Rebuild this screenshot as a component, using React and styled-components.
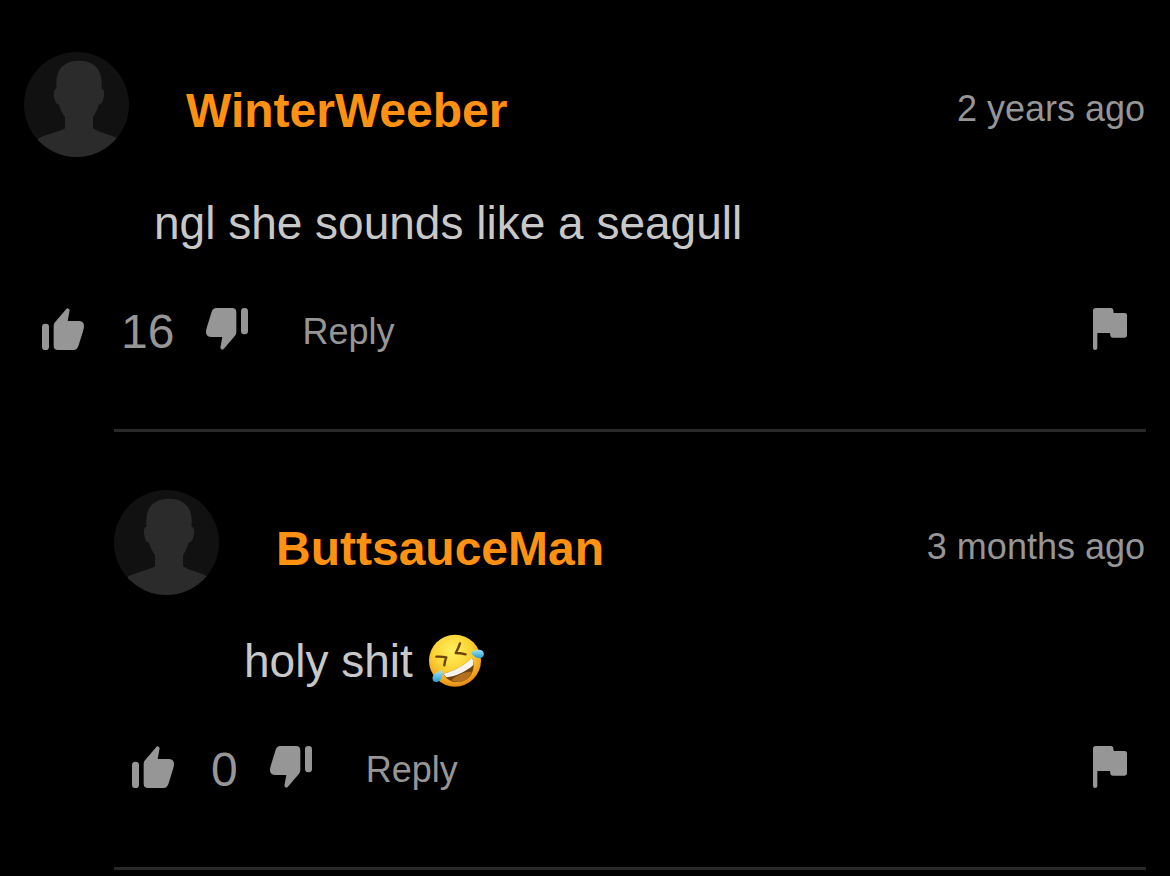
import React from 'react';
import styled, { createGlobalStyle } from 'styled-components';

const comments = [
    {
        id: 1,
        user: 'WinterWeeber',
        date: '2 years ago',
        text: 'ngl she sounds like a seagull',
        votes: 16,
    },
    {
        id: 2,
        user: 'ButtsauceMan',
        date: '3 months ago',
        text: 'holy shit',
        laughing: true,
        votes: 0,
        nested: true,
    },
];

const AvatarIcon = () => (
    <svg viewBox="0 0 315 315" aria-hidden="true">
        <defs>
            <clipPath id="avatar-circle">
                <circle cx="157.5" cy="157.5" r="157.5" />
            </clipPath>
        </defs>
        <g clipPath="url(#avatar-circle)">
            <rect width="315" height="315" fill="#111111" />
            <path
                fill="#2b2b2b"
                d="M165 26C128 26 103 44 98 78C96 90 97 100 98 109C89 112 88 124 91 138C94 150 97 157 104 157C109 173 116 186 123 196V229C110 237 88 242 66 250C54 254 46 257 41 261V315H278V258C270 254 260 251 250 247C234 241 216 236 207 228V196C214 186 220 173 225 157C232 157 236 150 239 138C242 124 241 112 232 109C233 100 234 90 232 78C227 44 202 26 165 26Z"
            />
        </g>
    </svg>
);

const ThumbIcon = () => (
    <svg viewBox="0 0 126 126" aria-hidden="true">
        <rect x="0" y="47" width="21" height="79" rx="10" />
        <path d="M35 54Q35 47 39 43L71 5Q76 -1 80 2Q84 5 82 12L77 39H112Q126 41 126 54Q126 60 124 66L110 112Q106 126 95 126H48Q35 126 35 113Z" />
    </svg>
);

const FlagIcon = () => (
    <svg viewBox="0 0 102 126" aria-hidden="true">
        <path d="M8 0H54Q60 0 61 6L62 15H95Q102 15 102 22V82Q102 89 95 89H60Q53 89 52 83L51 75H13V120Q13 126 6 126Q0 126 0 120V8Q0 0 8 0Z" />
    </svg>
);

const LaughingIcon = () => (
    <svg viewBox="0 0 168 168" role="img" aria-label="rolling on the floor laughing">
        <defs>
            <radialGradient id="face" cx="0.45" cy="0.32" r="0.7">
                <stop offset="0" stopColor="#fff05e" />
                <stop offset="0.5" stopColor="#fcd436" />
                <stop offset="0.82" stopColor="#f3a922" />
                <stop offset="1" stopColor="#de8416" />
            </radialGradient>
            <linearGradient id="tear" x1="0" y1="0" x2="0" y2="1">
                <stop offset="0" stopColor="#a5e6f8" />
                <stop offset="1" stopColor="#269dce" />
            </linearGradient>
        </defs>
        <circle cx="81" cy="83" r="78" fill="url(#face)" />
        <path
            fill="none"
            stroke="#6b430b"
            strokeWidth="7"
            strokeLinecap="round"
            strokeLinejoin="round"
            d="M25 71Q42 70 55 73Q50 84 49 97M96 31Q91 46 83 60Q97 60 113 64"
        />
        <path fill="#70430d" d="M46 122C76 114 108 98 132 74C143 96 136 126 114 140C90 154 60 148 46 122Z" />
        <path fill="#b5701f" d="M70 142C84 128 114 114 131 117C127 127 121 135 114 140C100 149 84 149 70 142Z" />
        <path fill="#f7f4ee" d="M46 122C76 114 108 98 132 74Q138 85 136 96C114 116 84 130 55 133Z" />
        <path fill="url(#tear)" d="M129 60C138 49 156 47 164 54C171 63 167 74 156 75C146 77 136 69 129 60Z" />
        <path fill="url(#tear)" d="M42 111C47 127 39 145 27 147C16 149 11 139 15 130C20 120 31 115 42 111Z" />
    </svg>
);

const Comment = ({ comment }) => (
    <Item $nested={comment.nested}>
        <Header>
            <Avatar>
                <AvatarIcon />
            </Avatar>
            <UserName href="#">{comment.user}</UserName>
            <DateText>{comment.date}</DateText>
        </Header>
        <Message>
            {comment.text}
            {comment.laughing && <LaughingIcon />}
        </Message>
        <Actions>
            <IconButton type="button" aria-label="Like">
                <ThumbIcon />
            </IconButton>
            <Votes>{comment.votes}</Votes>
            <IconButton type="button" aria-label="Dislike" $flipped>
                <ThumbIcon />
            </IconButton>
            <ReplyButton type="button">Reply</ReplyButton>
            <FlagButton type="button" aria-label="Report">
                <FlagIcon />
            </FlagButton>
        </Actions>
    </Item>
);

const App = () => {
    return (
        <>
            <GlobalStyle />
            <Comments>
                {comments.map((comment) => (
                    <React.Fragment key={comment.id}>
                        <Comment comment={comment} />
                        <Divider />
                    </React.Fragment>
                ))}
            </Comments>
        </>
    );
};

const GlobalStyle = createGlobalStyle`
    * {
        box-sizing: border-box;
    }
    body {
        margin: 0;
        background: #000;
        font-family: 'Liberation Sans', Arial, sans-serif;
    }
    button {
        padding: 0;
        border: 0;
        background: none;
        font-family: inherit;
        cursor: pointer;
    }
    svg {
        display: block;
    }
`;

const Comments = styled.main`
    padding: 52px 24px 0;
`;

const Item = styled.article`
    margin-left: ${({ $nested }) => ($nested ? '90px' : '0')};
    padding-bottom: 70px;
`;

const Header = styled.header`
    display: flex;
    align-items: center;
`;

const Avatar = styled.div`
    flex: none;
    width: 105px;
    height: 105px;
`;

const UserName = styled.a`
    margin-left: 57px;
    padding-top: 12px;
    color: #ff9112;
    font-size: 48px;
    font-weight: bold;
    line-height: 56px;
    text-decoration: none;
`;

const DateText = styled.time`
    margin-left: auto;
    padding: 8px 1px 0 0;
    color: #969696;
    font-size: 36px;
    line-height: 40px;
`;

const Message = styled.p`
    display: flex;
    align-items: center;
    gap: 15px;
    margin: 38px 0 54px 130px;
    color: #c8c8c8;
    font-size: 46px;
    line-height: 56px;

    svg {
        width: 56px;
        height: 56px;
    }
`;

const Actions = styled.div`
    display: flex;
    align-items: center;
    height: 54px;
    padding: 0 19px 0 18px;
    color: #969696;
`;

const IconButton = styled.button`
    width: 42px;
    height: 42px;
    margin-bottom: 6px;
    color: inherit;

    svg {
        width: 100%;
        height: 100%;
        fill: currentColor;
        transform: ${({ $flipped }) => ($flipped ? 'rotate(180deg)' : 'none')};
    }
`;

const FlagButton = styled(IconButton)`
    width: 34px;
    margin-left: auto;
`;

const Votes = styled.span`
    margin: 0 32px 0 37px;
    font-size: 48px;
    line-height: 52px;
`;

const ReplyButton = styled.button`
    margin-left: 54px;
    color: inherit;
    font-size: 36px;
    line-height: 40px;
`;

const Divider = styled.hr`
    height: 3px;
    margin: 0 0 58px 90px;
    border: 0;
    background: #292929;

    &:last-child {
        margin-bottom: 0;
    }
`;

export default App;
